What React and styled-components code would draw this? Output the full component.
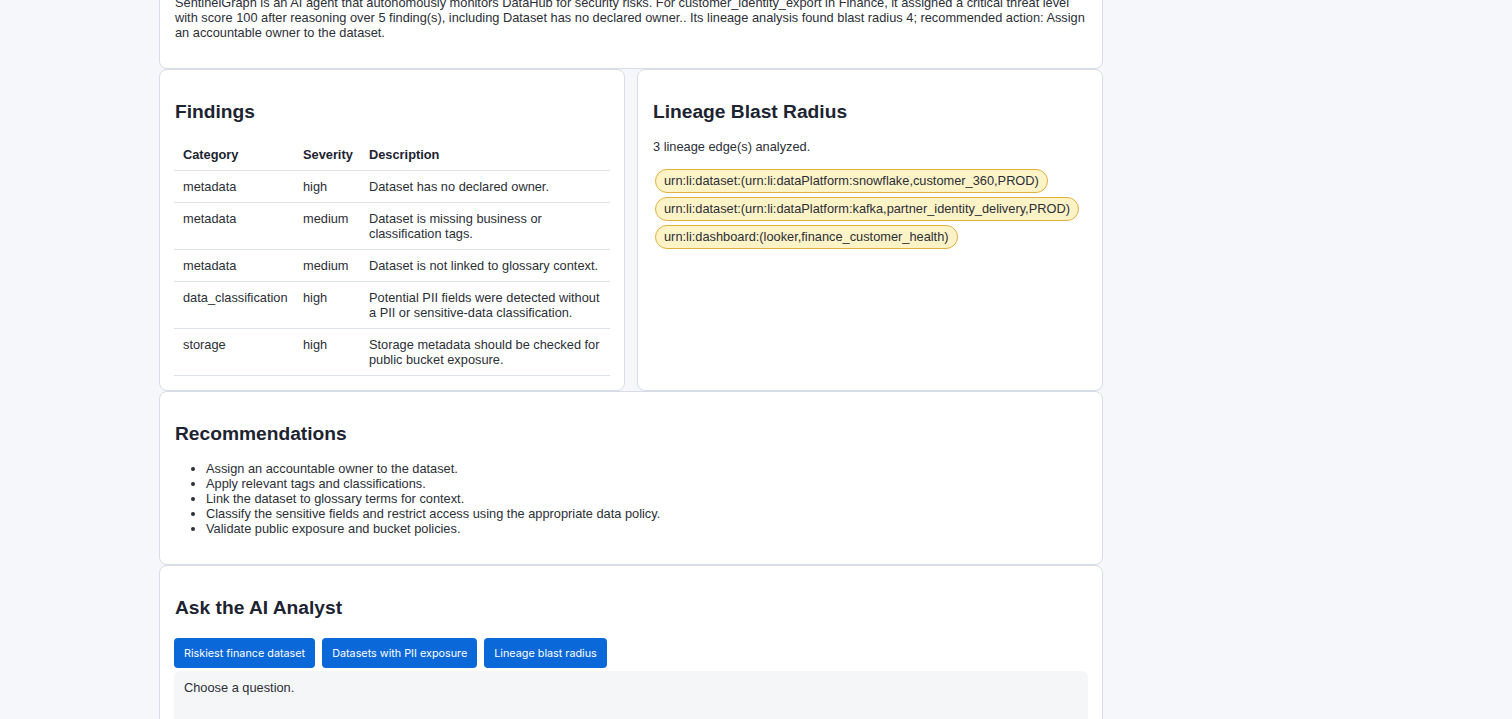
import React from "react";
import styled, { createGlobalStyle } from "styled-components";

const GlobalStyle = createGlobalStyle`
  html, body {
    margin: 0;
    padding: 0;
    background: #f5f7fa;
    font-family: "Liberation Sans", Arial, sans-serif;
    font-size: 12.8px;
    color: #2b2f36;
    overflow: hidden;
  }
`;

const Page = styled.main`
  width: 944px;
  margin: -34px 0 0 159px;
`;

const Card = styled.section`
  background: #ffffff;
  border: 1px solid #d8dde5;
  border-radius: 8px;
  padding: ${({ $compact }) => ($compact ? "15px 14px" : "16px 14px 14px")};
`;

const Columns = styled.div`
  display: grid;
  grid-template-columns: 1fr 1fr;
  column-gap: 12px;
`;

const Heading = styled.h2`
  margin: 14px 0 16px 1px;
  font-size: 19.2px;
  line-height: 23px;
  font-weight: 700;
  color: #1c2331;
`;

const Text = styled.p`
  margin: 13px 0 13px 1px;
  line-height: 15px;
`;

const Table = styled.table`
  width: 100%;
  table-layout: fixed;
  border-collapse: collapse;
  text-align: left;
`;

const Th = styled.th`
  width: ${({ $w }) => ($w ? `${$w}px` : "auto")};
  padding: 8px 8px 8px 9px;
  font-weight: 700;
  color: #1c2331;
  line-height: 15px;
  border-bottom: 1px solid #dde2e8;
  vertical-align: top;
`;

const Td = styled.td`
  padding: 8px 8px 8px 9px;
  line-height: 15px;
  border-bottom: 1px solid #dde2e8;
  vertical-align: top;
`;

const Pills = styled.div`
  display: flex;
  flex-wrap: wrap;
  align-items: flex-start;
  padding-left: 1px;
`;

const Pill = styled.span`
  margin: 2px;
  padding: 3px 8px;
  line-height: 16px;
  background: #fef3c7;
  border: 1px solid #e0b13c;
  border-radius: 12px;
  white-space: nowrap;
`;

const List = styled.ul`
  margin: 13px 0 14px;
  padding-left: 32px;
  line-height: 15px;
`;

const ButtonRow = styled.div`
  display: flex;
  gap: 7px;
  margin: 19px 0 3px;
`;

const QuestionButton = styled.button`
  height: 30px;
  padding: 0 10px;
  border: none;
  border-radius: 4px;
  background: #0a68d8;
  color: #ffffff;
  font-family: Inter, "Liberation Sans", sans-serif;
  font-size: 10.8px;
  cursor: pointer;
`;

const Answer = styled.div`
  min-height: 80px;
  padding: 9px 10px;
  background: #f5f6f8;
  border-radius: 6px;
  line-height: 15px;
`;

const findings = [
  ["metadata", "high", "Dataset has no declared owner."],
  ["metadata", "medium", "Dataset is missing business or classification tags."],
  ["metadata", "medium", "Dataset is not linked to glossary context."],
  ["data_classification", "high", "Potential PII fields were detected without a PII or sensitive-data classification."],
  ["storage", "high", "Storage metadata should be checked for public bucket exposure."],
];

const edges = [
  "urn:li:dataset:(urn:li:dataPlatform:snowflake,customer_360,PROD)",
  "urn:li:dataset:(urn:li:dataPlatform:kafka,partner_identity_delivery,PROD)",
  "urn:li:dashboard:(looker,finance_customer_health)",
];

const recommendations = [
  "Assign an accountable owner to the dataset.",
  "Apply relevant tags and classifications.",
  "Link the dataset to glossary terms for context.",
  "Classify the sensitive fields and restrict access using the appropriate data policy.",
  "Validate public exposure and bucket policies.",
];

const questions = ["Riskiest finance dataset", "Datasets with PII exposure", "Lineage blast radius"];

export default function App() {
  return (
    <>
      <GlobalStyle />
      <Page>
        <Card $compact>
          <Text>
            SentinelGraph is an AI agent that autonomously monitors DataHub for security risks. For
            customer_identity_export in Finance, it assigned a critical threat level with score 100 after
            reasoning over 5 finding(s), including Dataset has no declared owner.. Its lineage analysis found
            blast radius 4; recommended action: Assign an accountable owner to the dataset.
          </Text>
        </Card>

        <Columns>
          <Card>
            <Heading>Findings</Heading>
            <Table>
              <thead>
                <tr>
                  <Th $w={103}>Category</Th>
                  <Th $w={49}>Severity</Th>
                  <Th>Description</Th>
                </tr>
              </thead>
              <tbody>
                {findings.map(([category, severity, description], i) => (
                  <tr key={i}>
                    <Td>{category}</Td>
                    <Td>{severity}</Td>
                    <Td>{description}</Td>
                  </tr>
                ))}
              </tbody>
            </Table>
          </Card>

          <Card>
            <Heading>Lineage Blast Radius</Heading>
            <Text>3 lineage edge(s) analyzed.</Text>
            <Pills>
              {edges.map((urn) => (
                <Pill key={urn}>{urn}</Pill>
              ))}
            </Pills>
          </Card>
        </Columns>

        <Card>
          <Heading>Recommendations</Heading>
          <List>
            {recommendations.map((item) => (
              <li key={item}>{item}</li>
            ))}
          </List>
        </Card>

        <Card>
          <Heading>Ask the AI Analyst</Heading>
          <ButtonRow>
            {questions.map((q) => (
              <QuestionButton key={q}>{q}</QuestionButton>
            ))}
          </ButtonRow>
          <Answer>Choose a question.</Answer>
        </Card>
      </Page>
    </>
  );
}
